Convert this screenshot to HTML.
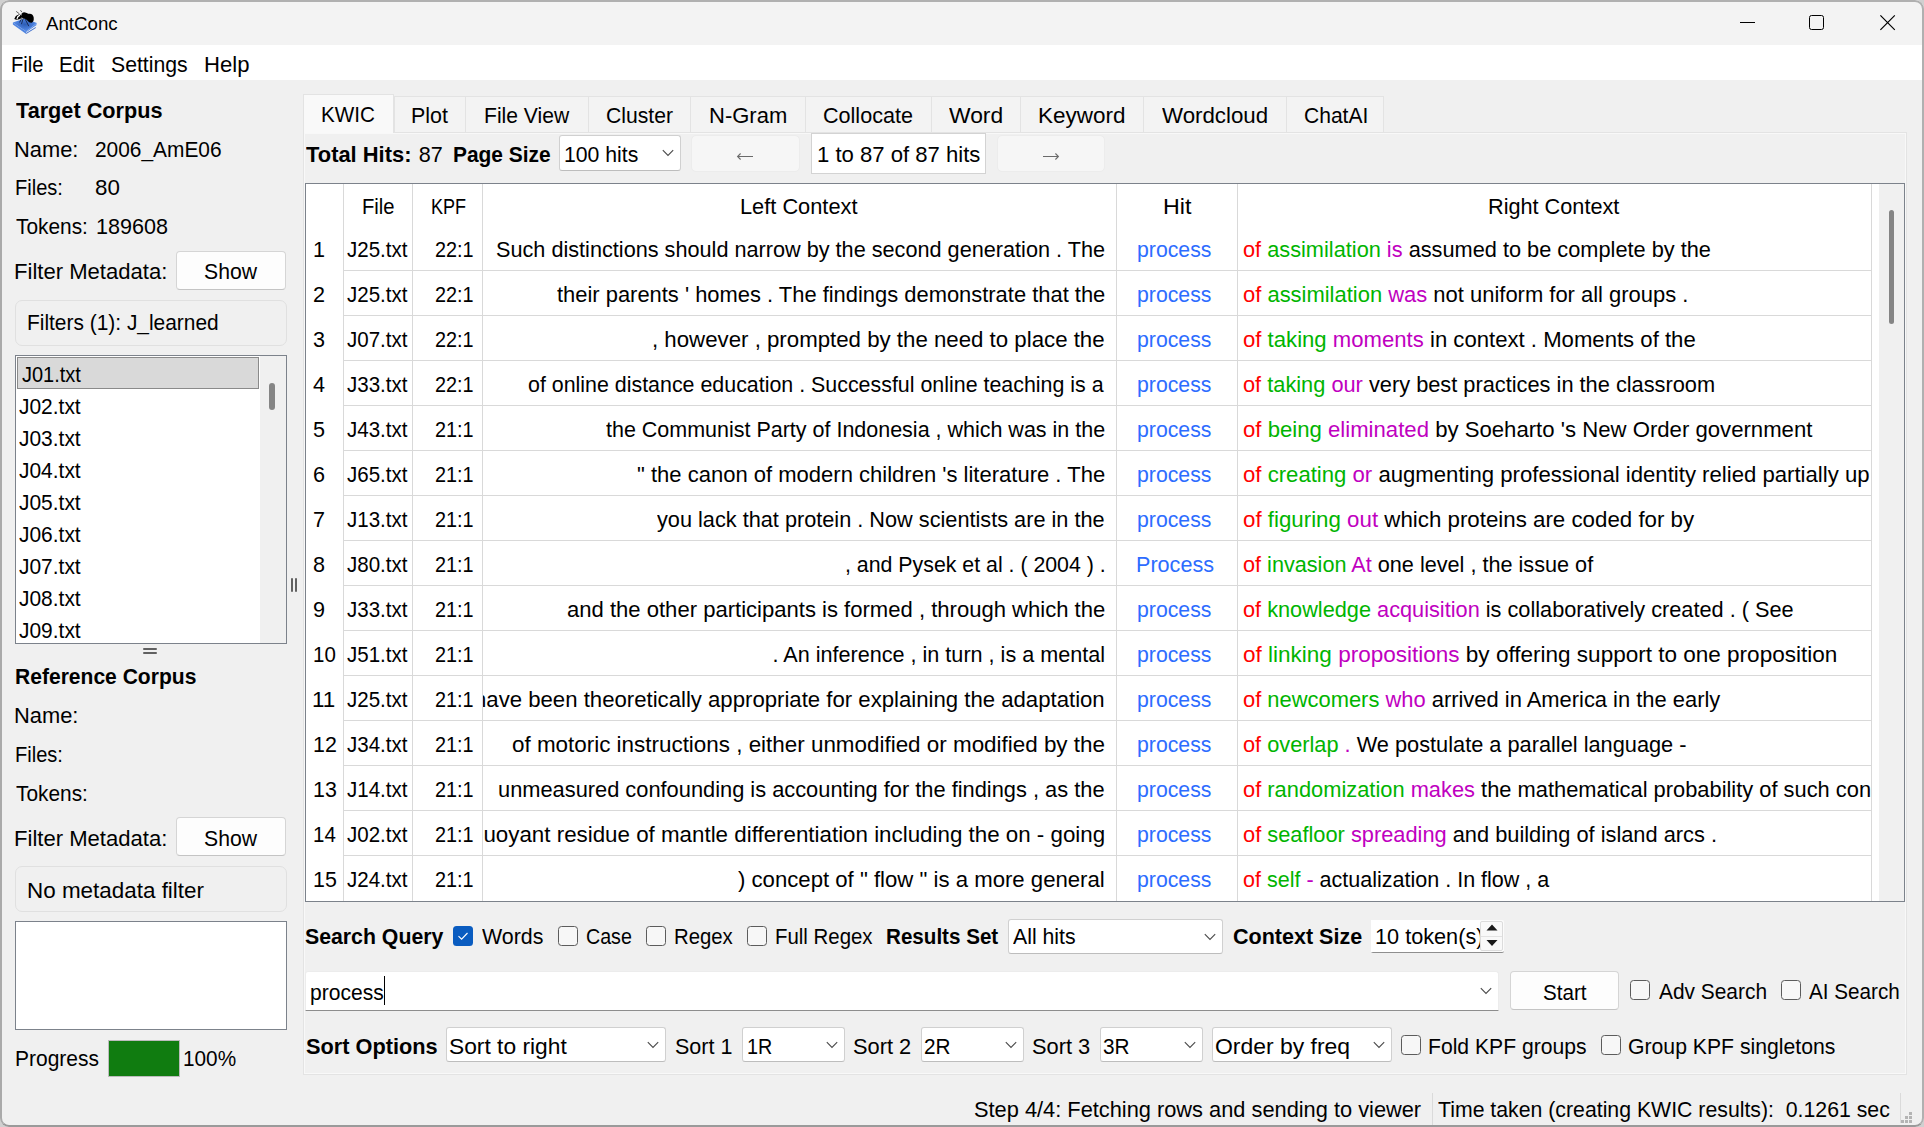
<!DOCTYPE html>
<html><head><meta charset="utf-8"><title>AntConc</title>
<style>
html,body{margin:0;padding:0;}
body{width:1924px;height:1127px;overflow:hidden;position:relative;background:#d0d0d0;font-family:"Liberation Sans",sans-serif;color:#000;}
#win{position:absolute;left:0;top:0;width:1924px;height:1127px;background:#f0f0f0;border-radius:9px;overflow:hidden;}
#frame{position:absolute;left:0;top:0;width:1924px;height:1127px;border:2px solid #b0b0b0;border-bottom-color:#9a9a9a;border-left-color:#aaaaaa;border-radius:9px;box-sizing:border-box;pointer-events:none;}
.t{position:absolute;white-space:pre;}
.b{position:absolute;}
</style></head><body><div id="win">
<div class="b" style="left:0px;top:0px;width:1924px;height:45px;background:#f3f3f3;"></div>
<div class="b" style="left:0px;top:45px;width:1924px;height:35px;background:#fff;"></div>
<svg class="b" style="left:10px;top:8px" width="30" height="28" viewBox="0 0 30 28">
<defs><radialGradient id="bk" cx="0.5" cy="0.45" r="0.65"><stop offset="0" stop-color="#2c5cb4"/><stop offset="0.55" stop-color="#4a7fdc"/><stop offset="1" stop-color="#6499f0"/></radialGradient></defs>
<path d="M2.9 14.6 L14.5 10.4 L26.9 15.1 L16.2 23.6 Z" fill="url(#bk)"/>
<path d="M2.9 14.6 L16.2 23.6 L16.2 25.9 L2.9 16.6 Z" fill="#4f84e0"/>
<path d="M16.2 23.6 L26.9 15.1 L26.2 17.4 L16.2 24.4 Z" fill="#5b8fe8"/>
<path d="M16.2 24.4 L26.2 17.4 L26.1 18.8 L16.2 25.0 Z" fill="#f4f4f4"/>
<path d="M16.2 25.0 L26.1 18.8 L25.4 20.3 L16.2 25.9 Z" fill="#3f6fcc"/>
<path d="M11.5 5.8 Q13.2 3.6 15.2 4.6 Q16.8 5.2 18.2 5.8 Q23 4.9 23.7 9.5 Q24.2 13.8 21.6 14.8 Q19.2 15.1 17.4 12.6 Q15.6 10.6 13.2 10.5 Q11.2 10.2 11.5 5.8 Z" fill="#000"/>
<path d="M4.3 11 Q5.2 7.6 8.6 6.6 Q11.3 6.2 12.2 8.2 Q12.1 10.6 9.4 11.3 Q6.3 12.2 4.3 11 Z" fill="#000"/>
<path d="M7.1 10.6 Q7.3 8.5 9.6 7.4" stroke="#fff" stroke-width="1.2" fill="none" stroke-linecap="round"/>
<path d="M6.2 3.4 L9.4 5.8 M10.5 2.2 L11.9 4.2" stroke="#222" stroke-width="0.7"/>
<path d="M11.7 10.4 L9.6 14.4 M13.3 10.2 L11.4 16.2 M14.9 10.6 L18.8 18.2" stroke="#15254a" stroke-width="0.9"/>
</svg>
<div class="t" style="top:12.12px;font-size:18.4px;line-height:23px;left:46.20px;transform:scaleX(1.0157);transform-origin:0 0;"><span id="k1">AntConc</span></div>
<div class="b" style="left:1740px;top:22px;width:15px;height:1px;background:#000;"></div>
<div class="b" style="left:1809px;top:15px;width:15px;height:15px;border:1.3px solid #000;border-radius:2.5px;box-sizing:border-box;"></div>
<svg class="b" style="left:1879px;top:14px" width="18" height="18" viewBox="0 0 18 18"><path d="M1.4 1.4 L15.8 15.8 M15.8 1.4 L1.4 15.8" stroke="#000" stroke-width="1.2"/></svg>
<div class="t" style="top:51.02px;font-size:21.6px;line-height:27px;left:10.57px;transform:scaleX(0.9303);transform-origin:0 0;"><span id="k2">File</span></div>
<div class="t" style="top:51.02px;font-size:21.6px;line-height:27px;left:59.45px;transform:scaleX(0.9500);transform-origin:0 0;"><span id="k3">Edit</span></div>
<div class="t" style="top:51.02px;font-size:21.6px;line-height:27px;left:110.82px;transform:scaleX(0.9831);transform-origin:0 0;"><span id="k4">Settings</span></div>
<div class="t" style="top:51.02px;font-size:21.6px;line-height:27px;left:204.18px;transform:scaleX(1.0233);transform-origin:0 0;"><span id="k5">Help</span></div>
<div class="t" style="top:96.52px;font-size:21.6px;line-height:27px;font-weight:700;left:15.50px;transform:scaleX(1.0034);transform-origin:0 0;"><span id="k6">Target Corpus</span></div>
<div class="t" style="top:135.92px;font-size:21.6px;line-height:27px;left:14.49px;transform:scaleX(1.0131);transform-origin:0 0;"><span id="k7">Name:</span></div>
<div class="t" style="top:135.92px;font-size:21.6px;line-height:27px;left:95.03px;transform:scaleX(0.9674);transform-origin:0 0;"><span id="k8">2006_AmE06</span></div>
<div class="t" style="top:174.32px;font-size:21.6px;line-height:27px;left:14.57px;transform:scaleX(0.9286);transform-origin:0 0;"><span id="k9">Files:</span></div>
<div class="t" style="top:174.32px;font-size:21.6px;line-height:27px;left:94.97px;transform:scaleX(1.0348);transform-origin:0 0;"><span id="k10">80</span></div>
<div class="t" style="top:212.92px;font-size:21.6px;line-height:27px;left:15.50px;transform:scaleX(0.9658);transform-origin:0 0;"><span id="k11">Tokens:</span></div>
<div class="t" style="top:212.92px;font-size:21.6px;line-height:27px;left:96.30px;transform:scaleX(0.9986);transform-origin:0 0;"><span id="k12">189608</span></div>
<div class="t" style="top:258.02px;font-size:21.6px;line-height:27px;left:14.28px;transform:scaleX(1.0224);transform-origin:0 0;"><span id="k13">Filter Metadata:</span></div>
<div class="b" style="left:176px;top:251px;width:110px;height:39px;background:#fdfdfd;border:1px solid #d5d5d5;border-bottom-color:#c4c4c4;border-radius:4px;box-sizing:border-box;"></div>
<div class="t" style="top:258.02px;font-size:21.6px;line-height:27px;left:203.50px;transform:scaleX(0.9811);transform-origin:0 0;"><span id="k14">Show</span></div>
<div class="b" style="left:15px;top:300px;width:272px;height:46px;background:#f0f0f0;border:1px solid #e0e0e0;border-radius:7px;box-sizing:border-box;"></div>
<div class="t" style="top:309.32px;font-size:21.6px;line-height:27px;left:26.95px;transform:scaleX(0.9682);transform-origin:0 0;"><span id="k15">Filters (1): J_learned</span></div>
<div class="b" style="left:15px;top:355px;width:272px;height:289px;background:#fff;border:1px solid #7c828b;box-sizing:border-box;"></div>
<div class="b" style="left:260px;top:356px;width:26px;height:287px;background:#f0f0f0;"></div>
<div class="b" style="left:17px;top:357px;width:242px;height:32px;background:#d9d9d9;border:1px solid #8a8a8a;box-sizing:border-box;"></div>
<div class="t" style="top:361.02px;font-size:21.6px;line-height:27px;left:22.11px;transform:scaleX(0.9258);transform-origin:0 0;"><span id="k16">J01.txt</span></div>
<div class="t" style="top:393.02px;font-size:21.6px;line-height:27px;left:19.32px;transform:scaleX(0.9698);transform-origin:0 0;"><span id="k17">J02.txt</span></div>
<div class="t" style="top:425.02px;font-size:21.6px;line-height:27px;left:19.32px;transform:scaleX(0.9698);transform-origin:0 0;"><span id="k18">J03.txt</span></div>
<div class="t" style="top:457.02px;font-size:21.6px;line-height:27px;left:19.32px;transform:scaleX(0.9698);transform-origin:0 0;"><span id="k19">J04.txt</span></div>
<div class="t" style="top:489.02px;font-size:21.6px;line-height:27px;left:19.32px;transform:scaleX(0.9698);transform-origin:0 0;"><span id="k20">J05.txt</span></div>
<div class="t" style="top:521.02px;font-size:21.6px;line-height:27px;left:19.32px;transform:scaleX(0.9698);transform-origin:0 0;"><span id="k21">J06.txt</span></div>
<div class="t" style="top:553.02px;font-size:21.6px;line-height:27px;left:19.32px;transform:scaleX(0.9698);transform-origin:0 0;"><span id="k22">J07.txt</span></div>
<div class="t" style="top:585.02px;font-size:21.6px;line-height:27px;left:19.32px;transform:scaleX(0.9698);transform-origin:0 0;"><span id="k23">J08.txt</span></div>
<div class="t" style="top:617.02px;font-size:21.6px;line-height:27px;left:19.32px;transform:scaleX(0.9698);transform-origin:0 0;"><span id="k24">J09.txt</span></div>
<div class="b" style="left:269px;top:383px;width:6px;height:27px;background:#858585;border-radius:3px;"></div>
<div class="b" style="left:143px;top:648px;width:14px;height:2px;background:#616161;border-radius:1px;"></div>
<div class="b" style="left:143px;top:652px;width:14px;height:2px;background:#616161;border-radius:1px;"></div>
<div class="b" style="left:291px;top:578px;width:2px;height:14px;background:#616161;border-radius:1px;"></div>
<div class="b" style="left:295px;top:578px;width:2px;height:14px;background:#616161;border-radius:1px;"></div>
<div class="t" style="top:662.52px;font-size:21.6px;line-height:27px;font-weight:700;left:15.03px;transform:scaleX(0.9750);transform-origin:0 0;"><span id="k25">Reference Corpus</span></div>
<div class="t" style="top:701.52px;font-size:21.6px;line-height:27px;left:14.49px;transform:scaleX(1.0131);transform-origin:0 0;"><span id="k26">Name:</span></div>
<div class="t" style="top:741.02px;font-size:21.6px;line-height:27px;left:14.57px;transform:scaleX(0.9286);transform-origin:0 0;"><span id="k27">Files:</span></div>
<div class="t" style="top:780.02px;font-size:21.6px;line-height:27px;left:15.50px;transform:scaleX(0.9658);transform-origin:0 0;"><span id="k28">Tokens:</span></div>
<div class="t" style="top:824.52px;font-size:21.6px;line-height:27px;left:14.28px;transform:scaleX(1.0224);transform-origin:0 0;"><span id="k29">Filter Metadata:</span></div>
<div class="b" style="left:176px;top:817px;width:110px;height:39px;background:#fdfdfd;border:1px solid #d5d5d5;border-bottom-color:#c4c4c4;border-radius:4px;box-sizing:border-box;"></div>
<div class="t" style="top:824.52px;font-size:21.6px;line-height:27px;left:203.50px;transform:scaleX(0.9811);transform-origin:0 0;"><span id="k30">Show</span></div>
<div class="b" style="left:15px;top:866px;width:272px;height:46px;background:#f0f0f0;border:1px solid #e0e0e0;border-radius:7px;box-sizing:border-box;"></div>
<div class="t" style="top:876.52px;font-size:21.6px;line-height:27px;left:26.94px;transform:scaleX(1.0385);transform-origin:0 0;"><span id="k31">No metadata filter</span></div>
<div class="b" style="left:15px;top:921px;width:272px;height:109px;background:#fff;border:1px solid #7c828b;box-sizing:border-box;"></div>
<div class="t" style="top:1045.02px;font-size:21.6px;line-height:27px;left:15.03px;transform:scaleX(0.9718);transform-origin:0 0;"><span id="k32">Progress</span></div>
<div class="b" style="left:108px;top:1040px;width:72px;height:37px;background:#107c10;border:1px solid #bcbcbc;box-sizing:border-box;"></div>
<div class="t" style="top:1045.02px;font-size:21.6px;line-height:27px;left:182.74px;transform:scaleX(0.9611);transform-origin:0 0;"><span id="k33">100%</span></div>
<div class="b" style="left:303px;top:132px;width:1604px;height:943px;border:1px solid #e3e3e3;box-sizing:border-box;"></div>
<div class="b" style="left:304px;top:133px;width:1602px;height:941px;border:1px solid #f8f8f8;box-sizing:border-box;"></div>
<div class="b" style="left:394px;top:96px;width:990px;height:36px;background:#f3f3f3;border-top:1px solid #e3e3e3;border-right:1px solid #e3e3e3;box-sizing:border-box;"></div>
<div class="b" style="left:394px;top:96px;width:1px;height:36px;background:#e3e3e3;"></div>
<div class="b" style="left:465px;top:96px;width:1px;height:36px;background:#e3e3e3;"></div>
<div class="b" style="left:588px;top:96px;width:1px;height:36px;background:#e3e3e3;"></div>
<div class="b" style="left:690px;top:96px;width:1px;height:36px;background:#e3e3e3;"></div>
<div class="b" style="left:804.5px;top:96px;width:1.0px;height:36px;background:#e3e3e3;"></div>
<div class="b" style="left:930.5px;top:96px;width:1.0px;height:36px;background:#e3e3e3;"></div>
<div class="b" style="left:1020px;top:96px;width:1px;height:36px;background:#e3e3e3;"></div>
<div class="b" style="left:1142.5px;top:96px;width:1.0px;height:36px;background:#e3e3e3;"></div>
<div class="b" style="left:1285.5px;top:96px;width:1.0px;height:36px;background:#e3e3e3;"></div>
<div class="b" style="left:303px;top:94px;width:91px;height:39px;background:#f9f9f9;border:1px solid #e3e3e3;border-bottom:none;box-sizing:border-box;"></div>
<div class="t" style="top:100.62px;font-size:21.6px;line-height:27px;left:321.15px;transform:scaleX(0.9574);transform-origin:0 0;"><span id="k34">KWIC</span></div>
<div class="t" style="top:102.02px;font-size:21.6px;line-height:27px;left:411.20px;transform:scaleX(0.9917);transform-origin:0 0;"><span id="k35">Plot</span></div>
<div class="t" style="top:102.02px;font-size:21.6px;line-height:27px;left:483.92px;transform:scaleX(0.9767);transform-origin:0 0;"><span id="k36">File View</span></div>
<div class="t" style="top:102.02px;font-size:21.6px;line-height:27px;left:606.00px;transform:scaleX(0.9794);transform-origin:0 0;"><span id="k37">Cluster</span></div>
<div class="t" style="top:102.02px;font-size:21.6px;line-height:27px;left:708.74px;transform:scaleX(1.0187);transform-origin:0 0;"><span id="k38">N-Gram</span></div>
<div class="t" style="top:102.02px;font-size:21.6px;line-height:27px;left:822.88px;transform:scaleX(0.9989);transform-origin:0 0;"><span id="k39">Collocate</span></div>
<div class="t" style="top:102.02px;font-size:21.6px;line-height:27px;left:949.02px;transform:scaleX(1.0580);transform-origin:0 0;"><span id="k40">Word</span></div>
<div class="t" style="top:102.02px;font-size:21.6px;line-height:27px;left:1037.96px;transform:scaleX(1.0407);transform-origin:0 0;"><span id="k41">Keyword</span></div>
<div class="t" style="top:102.02px;font-size:21.6px;line-height:27px;left:1162.10px;transform:scaleX(1.0324);transform-origin:0 0;"><span id="k42">Wordcloud</span></div>
<div class="t" style="top:102.02px;font-size:21.6px;line-height:27px;left:1303.94px;transform:scaleX(0.9750);transform-origin:0 0;"><span id="k43">ChatAI</span></div>
<div class="t" style="top:141.02px;font-size:21.6px;line-height:27px;font-weight:700;left:305.50px;transform:scaleX(1.0147);transform-origin:0 0;"><span id="k44">Total Hits:</span></div>
<div class="t" style="top:141.02px;font-size:21.6px;line-height:27px;left:418.70px;transform:scaleX(1.0000);transform-origin:0 0;"><span id="k45">87</span></div>
<div class="t" style="top:141.02px;font-size:21.6px;line-height:27px;font-weight:700;left:452.53px;transform:scaleX(0.9687);transform-origin:0 0;"><span id="k46">Page Size</span></div>
<div class="b" style="left:559px;top:135px;width:122px;height:36px;background:#fff;border:1px solid #d0d0d0;border-bottom-color:#bdbdbd;border-radius:3px;box-sizing:border-box;"></div>
<svg class="b" style="left:661px;top:148.0px" width="14" height="10" viewBox="0 0 14 10"><path d="M1.8 2.2 L7 7.4 L12.2 2.2" fill="none" stroke="#4a4a4a" stroke-width="1.1"/></svg>
<div class="t" style="top:140.52px;font-size:21.6px;line-height:27px;left:563.82px;transform:scaleX(0.9824);transform-origin:0 0;"><span id="k47">100 hits</span></div>
<div class="b" style="left:691px;top:135px;width:109px;height:37px;background:#f6f6f6;border:1px solid #ececec;border-radius:5px;box-sizing:border-box;"></div>
<svg class="b" style="left:736px;top:151px" width="18" height="12" viewBox="0 0 18 12"><path d="M1.6 5.5 L17 5.5 M4.6 2.5 L1.6 5.5 L4.6 8.5" fill="none" stroke="#6a6a6a" stroke-width="1.1"/></svg>
<div class="b" style="left:811px;top:133px;width:175px;height:41px;background:#fff;border:1px solid #d3d3d3;box-sizing:border-box;"></div>
<div class="t" style="top:141.02px;font-size:21.6px;line-height:27px;left:816.68px;transform:scaleX(1.0234);transform-origin:0 0;"><span id="k48">1 to 87 of 87 hits</span></div>
<div class="b" style="left:997px;top:135px;width:108px;height:37px;background:#f6f6f6;border:1px solid #ececec;border-radius:5px;box-sizing:border-box;"></div>
<svg class="b" style="left:1042px;top:151px" width="18" height="12" viewBox="0 0 18 12"><path d="M1 5.5 L16.4 5.5 M13.4 2.5 L16.4 5.5 L13.4 8.5" fill="none" stroke="#6a6a6a" stroke-width="1.1"/></svg>
<div class="b" style="left:305px;top:183px;width:1600px;height:719px;background:#fff;border:1px solid #7c828b;box-sizing:border-box;"></div>
<div class="b" style="left:1879px;top:184px;width:25px;height:717px;background:#f0f0f0;"></div>
<div class="b" style="left:1889px;top:210px;width:5px;height:114px;background:#858585;border-radius:3px;"></div>
<div class="b" style="left:343px;top:184px;width:1px;height:717px;background:#d9d9d9;"></div>
<div class="b" style="left:412px;top:184px;width:1px;height:717px;background:#d9d9d9;"></div>
<div class="b" style="left:482px;top:184px;width:1px;height:717px;background:#d9d9d9;"></div>
<div class="b" style="left:1116px;top:184px;width:1px;height:717px;background:#d9d9d9;"></div>
<div class="b" style="left:1237px;top:184px;width:1px;height:717px;background:#d9d9d9;"></div>
<div class="b" style="left:1871px;top:184px;width:1px;height:717px;background:#d9d9d9;"></div>
<div class="b" style="left:344px;top:270px;width:1528px;height:1px;background:#d9d9d9;"></div>
<div class="b" style="left:344px;top:315px;width:1528px;height:1px;background:#d9d9d9;"></div>
<div class="b" style="left:344px;top:360px;width:1528px;height:1px;background:#d9d9d9;"></div>
<div class="b" style="left:344px;top:405px;width:1528px;height:1px;background:#d9d9d9;"></div>
<div class="b" style="left:344px;top:450px;width:1528px;height:1px;background:#d9d9d9;"></div>
<div class="b" style="left:344px;top:495px;width:1528px;height:1px;background:#d9d9d9;"></div>
<div class="b" style="left:344px;top:540px;width:1528px;height:1px;background:#d9d9d9;"></div>
<div class="b" style="left:344px;top:585px;width:1528px;height:1px;background:#d9d9d9;"></div>
<div class="b" style="left:344px;top:630px;width:1528px;height:1px;background:#d9d9d9;"></div>
<div class="b" style="left:344px;top:675px;width:1528px;height:1px;background:#d9d9d9;"></div>
<div class="b" style="left:344px;top:720px;width:1528px;height:1px;background:#d9d9d9;"></div>
<div class="b" style="left:344px;top:765px;width:1528px;height:1px;background:#d9d9d9;"></div>
<div class="b" style="left:344px;top:810px;width:1528px;height:1px;background:#d9d9d9;"></div>
<div class="b" style="left:344px;top:855px;width:1528px;height:1px;background:#d9d9d9;"></div>
<div class="t" style="top:193.02px;font-size:21.6px;line-height:27px;left:362.15px;transform:scaleX(0.9364);transform-origin:0 0;"><span id="k49">File</span></div>
<div class="t" style="top:193.02px;font-size:21.6px;line-height:27px;left:430.87px;transform:scaleX(0.8350);transform-origin:0 0;"><span id="k50">KPF</span></div>
<div class="t" style="top:193.02px;font-size:21.6px;line-height:27px;left:740.07px;transform:scaleX(1.0087);transform-origin:0 0;"><span id="k51">Left Context</span></div>
<div class="t" style="top:193.02px;font-size:21.6px;line-height:27px;left:1162.61px;transform:scaleX(1.0760);transform-origin:0 0;"><span id="k52">Hit</span></div>
<div class="t" style="top:193.02px;font-size:21.6px;line-height:27px;left:1488.07px;transform:scaleX(1.0038);transform-origin:0 0;"><span id="k53">Right Context</span></div>
<div class="t" style="top:235.62px;font-size:21.6px;line-height:27px;left:313px;"><span id="k54">1</span></div>
<div class="t" style="top:235.62px;font-size:21.6px;line-height:27px;left:346.90px;transform:scaleX(0.9500);transform-origin:0 0;"><span id="k55">J25.txt</span></div>
<div class="t" style="top:235.62px;font-size:21.6px;line-height:27px;left:434.95px;transform:scaleX(0.9175);transform-origin:0 0;"><span id="k56">22:1</span></div>
<div class="b" style="left:483px;top:226px;width:633px;height:44px;overflow:hidden"><div class="t" style="top:9.62px;font-size:21.6px;line-height:27px;left:13.00px;transform:scaleX(1.0033);transform-origin:0 0;"><span id="k57">Such distinctions should narrow by the second generation . The</span></div></div>
<div class="t" style="top:235.62px;font-size:21.6px;line-height:27px;color:#2d6cff;left:1136.82px;transform:scaleX(0.9836);transform-origin:0 0;"><span id="k58">process</span></div>
<div class="b" style="left:1238px;top:226px;width:633px;height:44px;overflow:hidden"><div class="t" style="top:9.62px;font-size:21.6px;line-height:27px;left:5.00px;transform:scaleX(1.0073);transform-origin:0 0;"><span id="k59"><span style="color:#ff0000">of</span> <span style="color:#00b400">assimilation</span> <span style="color:#c000c0">is</span> assumed to be complete by the</span></div></div>
<div class="t" style="top:280.62px;font-size:21.6px;line-height:27px;left:313px;"><span id="k60">2</span></div>
<div class="t" style="top:280.62px;font-size:21.6px;line-height:27px;left:346.90px;transform:scaleX(0.9500);transform-origin:0 0;"><span id="k61">J25.txt</span></div>
<div class="t" style="top:280.62px;font-size:21.6px;line-height:27px;left:434.95px;transform:scaleX(0.9175);transform-origin:0 0;"><span id="k62">22:1</span></div>
<div class="b" style="left:483px;top:271px;width:633px;height:44px;overflow:hidden"><div class="t" style="top:9.62px;font-size:21.6px;line-height:27px;left:73.71px;transform:scaleX(1.0148);transform-origin:0 0;"><span id="k63">their parents ' homes . The findings demonstrate that the</span></div></div>
<div class="t" style="top:280.62px;font-size:21.6px;line-height:27px;color:#2d6cff;left:1136.82px;transform:scaleX(0.9836);transform-origin:0 0;"><span id="k64">process</span></div>
<div class="b" style="left:1238px;top:271px;width:633px;height:44px;overflow:hidden"><div class="t" style="top:9.62px;font-size:21.6px;line-height:27px;left:5.00px;transform:scaleX(1.0167);transform-origin:0 0;"><span id="k65"><span style="color:#ff0000">of</span> <span style="color:#00b400">assimilation</span> <span style="color:#c000c0">was</span> not uniform for all groups .</span></div></div>
<div class="t" style="top:325.62px;font-size:21.6px;line-height:27px;left:313px;"><span id="k66">3</span></div>
<div class="t" style="top:325.62px;font-size:21.6px;line-height:27px;left:346.90px;transform:scaleX(0.9500);transform-origin:0 0;"><span id="k67">J07.txt</span></div>
<div class="t" style="top:325.62px;font-size:21.6px;line-height:27px;left:434.95px;transform:scaleX(0.9175);transform-origin:0 0;"><span id="k68">22:1</span></div>
<div class="b" style="left:483px;top:316px;width:633px;height:44px;overflow:hidden"><div class="t" style="top:9.62px;font-size:21.6px;line-height:27px;left:169.40px;transform:scaleX(1.0302);transform-origin:0 0;"><span id="k69">, however , prompted by the need to place the</span></div></div>
<div class="t" style="top:325.62px;font-size:21.6px;line-height:27px;color:#2d6cff;left:1136.82px;transform:scaleX(0.9836);transform-origin:0 0;"><span id="k70">process</span></div>
<div class="b" style="left:1238px;top:316px;width:633px;height:44px;overflow:hidden"><div class="t" style="top:9.62px;font-size:21.6px;line-height:27px;left:5.00px;transform:scaleX(1.0249);transform-origin:0 0;"><span id="k71"><span style="color:#ff0000">of</span> <span style="color:#00b400">taking</span> <span style="color:#c000c0">moments</span> in context . Moments of the</span></div></div>
<div class="t" style="top:370.62px;font-size:21.6px;line-height:27px;left:313px;"><span id="k72">4</span></div>
<div class="t" style="top:370.62px;font-size:21.6px;line-height:27px;left:346.90px;transform:scaleX(0.9500);transform-origin:0 0;"><span id="k73">J33.txt</span></div>
<div class="t" style="top:370.62px;font-size:21.6px;line-height:27px;left:434.95px;transform:scaleX(0.9175);transform-origin:0 0;"><span id="k74">22:1</span></div>
<div class="b" style="left:483px;top:361px;width:633px;height:44px;overflow:hidden"><div class="t" style="top:9.62px;font-size:21.6px;line-height:27px;left:45.39px;transform:scaleX(0.9907);transform-origin:0 0;"><span id="k75">of online distance education . Successful online teaching is a</span></div></div>
<div class="t" style="top:370.62px;font-size:21.6px;line-height:27px;color:#2d6cff;left:1136.82px;transform:scaleX(0.9836);transform-origin:0 0;"><span id="k76">process</span></div>
<div class="b" style="left:1238px;top:361px;width:633px;height:44px;overflow:hidden"><div class="t" style="top:9.62px;font-size:21.6px;line-height:27px;left:5.00px;transform:scaleX(1.0086);transform-origin:0 0;"><span id="k77"><span style="color:#ff0000">of</span> <span style="color:#00b400">taking</span> <span style="color:#c000c0">our</span> very best practices in the classroom</span></div></div>
<div class="t" style="top:415.62px;font-size:21.6px;line-height:27px;left:313px;"><span id="k78">5</span></div>
<div class="t" style="top:415.62px;font-size:21.6px;line-height:27px;left:346.90px;transform:scaleX(0.9500);transform-origin:0 0;"><span id="k79">J43.txt</span></div>
<div class="t" style="top:415.62px;font-size:21.6px;line-height:27px;left:434.95px;transform:scaleX(0.9175);transform-origin:0 0;"><span id="k80">21:1</span></div>
<div class="b" style="left:483px;top:406px;width:633px;height:44px;overflow:hidden"><div class="t" style="top:9.62px;font-size:21.6px;line-height:27px;left:122.90px;transform:scaleX(0.9948);transform-origin:0 0;"><span id="k81">the Communist Party of Indonesia , which was in the</span></div></div>
<div class="t" style="top:415.62px;font-size:21.6px;line-height:27px;color:#2d6cff;left:1136.82px;transform:scaleX(0.9836);transform-origin:0 0;"><span id="k82">process</span></div>
<div class="b" style="left:1238px;top:406px;width:633px;height:44px;overflow:hidden"><div class="t" style="top:9.62px;font-size:21.6px;line-height:27px;left:5.00px;transform:scaleX(1.0258);transform-origin:0 0;"><span id="k83"><span style="color:#ff0000">of</span> <span style="color:#00b400">being</span> <span style="color:#c000c0">eliminated</span> by Soeharto 's New Order government</span></div></div>
<div class="t" style="top:460.62px;font-size:21.6px;line-height:27px;left:313px;"><span id="k84">6</span></div>
<div class="t" style="top:460.62px;font-size:21.6px;line-height:27px;left:346.90px;transform:scaleX(0.9500);transform-origin:0 0;"><span id="k85">J65.txt</span></div>
<div class="t" style="top:460.62px;font-size:21.6px;line-height:27px;left:434.95px;transform:scaleX(0.9175);transform-origin:0 0;"><span id="k86">21:1</span></div>
<div class="b" style="left:483px;top:451px;width:633px;height:44px;overflow:hidden"><div class="t" style="top:9.62px;font-size:21.6px;line-height:27px;left:153.85px;transform:scaleX(1.0197);transform-origin:0 0;"><span id="k87">" the canon of modern children 's literature . The</span></div></div>
<div class="t" style="top:460.62px;font-size:21.6px;line-height:27px;color:#2d6cff;left:1136.82px;transform:scaleX(0.9836);transform-origin:0 0;"><span id="k88">process</span></div>
<div class="b" style="left:1238px;top:451px;width:633px;height:44px;overflow:hidden"><div class="t" style="top:9.62px;font-size:21.6px;line-height:27px;left:5.00px;transform:scaleX(1.0254);transform-origin:0 0;"><span id="k89"><span style="color:#ff0000">of</span> <span style="color:#00b400">creating</span> <span style="color:#c000c0">or</span> augmenting professional identity relied partially up</span></div></div>
<div class="t" style="top:505.62px;font-size:21.6px;line-height:27px;left:313px;"><span id="k90">7</span></div>
<div class="t" style="top:505.62px;font-size:21.6px;line-height:27px;left:346.90px;transform:scaleX(0.9500);transform-origin:0 0;"><span id="k91">J13.txt</span></div>
<div class="t" style="top:505.62px;font-size:21.6px;line-height:27px;left:434.95px;transform:scaleX(0.9175);transform-origin:0 0;"><span id="k92">21:1</span></div>
<div class="b" style="left:483px;top:496px;width:633px;height:44px;overflow:hidden"><div class="t" style="top:9.62px;font-size:21.6px;line-height:27px;left:174.40px;transform:scaleX(1.0052);transform-origin:0 0;"><span id="k93">you lack that protein . Now scientists are in the</span></div></div>
<div class="t" style="top:505.62px;font-size:21.6px;line-height:27px;color:#2d6cff;left:1136.82px;transform:scaleX(0.9836);transform-origin:0 0;"><span id="k94">process</span></div>
<div class="b" style="left:1238px;top:496px;width:633px;height:44px;overflow:hidden"><div class="t" style="top:9.62px;font-size:21.6px;line-height:27px;left:5.00px;transform:scaleX(1.0325);transform-origin:0 0;"><span id="k95"><span style="color:#ff0000">of</span> <span style="color:#00b400">figuring</span> <span style="color:#c000c0">out</span> which proteins are coded for by</span></div></div>
<div class="t" style="top:550.62px;font-size:21.6px;line-height:27px;left:313px;"><span id="k96">8</span></div>
<div class="t" style="top:550.62px;font-size:21.6px;line-height:27px;left:346.90px;transform:scaleX(0.9500);transform-origin:0 0;"><span id="k97">J80.txt</span></div>
<div class="t" style="top:550.62px;font-size:21.6px;line-height:27px;left:434.95px;transform:scaleX(0.9175);transform-origin:0 0;"><span id="k98">21:1</span></div>
<div class="b" style="left:483px;top:541px;width:633px;height:44px;overflow:hidden"><div class="t" style="top:9.62px;font-size:21.6px;line-height:27px;left:362.26px;transform:scaleX(0.9873);transform-origin:0 0;"><span id="k99">, and Pysek et al . ( 2004 ) .</span></div></div>
<div class="t" style="top:550.62px;font-size:21.6px;line-height:27px;color:#2d6cff;left:675px;width:1000px;text-align:center;"><span id="k100">Process</span></div>
<div class="b" style="left:1238px;top:541px;width:633px;height:44px;overflow:hidden"><div class="t" style="top:9.62px;font-size:21.6px;line-height:27px;left:5.00px;transform:scaleX(1.0023);transform-origin:0 0;"><span id="k101"><span style="color:#ff0000">of</span> <span style="color:#00b400">invasion</span> <span style="color:#c000c0">At</span> one level , the issue of</span></div></div>
<div class="t" style="top:595.62px;font-size:21.6px;line-height:27px;left:313px;"><span id="k102">9</span></div>
<div class="t" style="top:595.62px;font-size:21.6px;line-height:27px;left:346.90px;transform:scaleX(0.9500);transform-origin:0 0;"><span id="k103">J33.txt</span></div>
<div class="t" style="top:595.62px;font-size:21.6px;line-height:27px;left:434.95px;transform:scaleX(0.9175);transform-origin:0 0;"><span id="k104">21:1</span></div>
<div class="b" style="left:483px;top:586px;width:633px;height:44px;overflow:hidden"><div class="t" style="top:9.62px;font-size:21.6px;line-height:27px;left:83.73px;transform:scaleX(1.0215);transform-origin:0 0;"><span id="k105">and the other participants is formed , through which the</span></div></div>
<div class="t" style="top:595.62px;font-size:21.6px;line-height:27px;color:#2d6cff;left:1136.82px;transform:scaleX(0.9836);transform-origin:0 0;"><span id="k106">process</span></div>
<div class="b" style="left:1238px;top:586px;width:633px;height:44px;overflow:hidden"><div class="t" style="top:9.62px;font-size:21.6px;line-height:27px;left:5.00px;transform:scaleX(1.0060);transform-origin:0 0;"><span id="k107"><span style="color:#ff0000">of</span> <span style="color:#00b400">knowledge</span> <span style="color:#c000c0">acquisition</span> is collaboratively created . ( See</span></div></div>
<div class="t" style="top:640.62px;font-size:21.6px;line-height:27px;left:312.55px;transform:scaleX(0.9478);transform-origin:0 0;"><span id="k108">10</span></div>
<div class="t" style="top:640.62px;font-size:21.6px;line-height:27px;left:346.90px;transform:scaleX(0.9500);transform-origin:0 0;"><span id="k109">J51.txt</span></div>
<div class="t" style="top:640.62px;font-size:21.6px;line-height:27px;left:434.95px;transform:scaleX(0.9175);transform-origin:0 0;"><span id="k110">21:1</span></div>
<div class="b" style="left:483px;top:631px;width:633px;height:44px;overflow:hidden"><div class="t" style="top:9.62px;font-size:21.6px;line-height:27px;left:289.52px;transform:scaleX(1.0000);transform-origin:0 0;"><span id="k111">. An inference , in turn , is a mental</span></div></div>
<div class="t" style="top:640.62px;font-size:21.6px;line-height:27px;color:#2d6cff;left:1136.82px;transform:scaleX(0.9836);transform-origin:0 0;"><span id="k112">process</span></div>
<div class="b" style="left:1238px;top:631px;width:633px;height:44px;overflow:hidden"><div class="t" style="top:9.62px;font-size:21.6px;line-height:27px;left:5.00px;transform:scaleX(1.0429);transform-origin:0 0;"><span id="k113"><span style="color:#ff0000">of</span> <span style="color:#00b400">linking</span> <span style="color:#c000c0">propositions</span> by offering support to one proposition</span></div></div>
<div class="t" style="top:685.62px;font-size:21.6px;line-height:27px;left:312.46px;transform:scaleX(1.0381);transform-origin:0 0;"><span id="k114">11</span></div>
<div class="t" style="top:685.62px;font-size:21.6px;line-height:27px;left:346.90px;transform:scaleX(0.9500);transform-origin:0 0;"><span id="k115">J25.txt</span></div>
<div class="t" style="top:685.62px;font-size:21.6px;line-height:27px;left:434.95px;transform:scaleX(0.9175);transform-origin:0 0;"><span id="k116">21:1</span></div>
<div class="b" style="left:483px;top:676px;width:633px;height:44px;overflow:hidden"><div class="t" style="top:9.62px;font-size:21.6px;line-height:27px;left:-8.67px;transform:scaleX(1.0261);transform-origin:0 0;"><span id="k117">have been theoretically appropriate for explaining the adaptation</span></div></div>
<div class="t" style="top:685.62px;font-size:21.6px;line-height:27px;color:#2d6cff;left:1136.82px;transform:scaleX(0.9836);transform-origin:0 0;"><span id="k118">process</span></div>
<div class="b" style="left:1238px;top:676px;width:633px;height:44px;overflow:hidden"><div class="t" style="top:9.62px;font-size:21.6px;line-height:27px;left:5.00px;transform:scaleX(1.0144);transform-origin:0 0;"><span id="k119"><span style="color:#ff0000">of</span> <span style="color:#00b400">newcomers</span> <span style="color:#c000c0">who</span> arrived in America in the early</span></div></div>
<div class="t" style="top:730.62px;font-size:21.6px;line-height:27px;left:312.51px;transform:scaleX(0.9909);transform-origin:0 0;"><span id="k120">12</span></div>
<div class="t" style="top:730.62px;font-size:21.6px;line-height:27px;left:346.90px;transform:scaleX(0.9500);transform-origin:0 0;"><span id="k121">J34.txt</span></div>
<div class="t" style="top:730.62px;font-size:21.6px;line-height:27px;left:434.95px;transform:scaleX(0.9175);transform-origin:0 0;"><span id="k122">21:1</span></div>
<div class="b" style="left:483px;top:721px;width:633px;height:44px;overflow:hidden"><div class="t" style="top:9.62px;font-size:21.6px;line-height:27px;left:29.08px;transform:scaleX(1.0379);transform-origin:0 0;"><span id="k123">of motoric instructions , either unmodified or modified by the</span></div></div>
<div class="t" style="top:730.62px;font-size:21.6px;line-height:27px;color:#2d6cff;left:1136.82px;transform:scaleX(0.9836);transform-origin:0 0;"><span id="k124">process</span></div>
<div class="b" style="left:1238px;top:721px;width:633px;height:44px;overflow:hidden"><div class="t" style="top:9.62px;font-size:21.6px;line-height:27px;left:5.00px;transform:scaleX(1.0075);transform-origin:0 0;"><span id="k125"><span style="color:#ff0000">of</span> <span style="color:#00b400">overlap</span> <span style="color:#c000c0">.</span> We postulate a parallel language -</span></div></div>
<div class="t" style="top:775.62px;font-size:21.6px;line-height:27px;left:312.51px;transform:scaleX(0.9909);transform-origin:0 0;"><span id="k126">13</span></div>
<div class="t" style="top:775.62px;font-size:21.6px;line-height:27px;left:346.90px;transform:scaleX(0.9500);transform-origin:0 0;"><span id="k127">J14.txt</span></div>
<div class="t" style="top:775.62px;font-size:21.6px;line-height:27px;left:434.95px;transform:scaleX(0.9175);transform-origin:0 0;"><span id="k128">21:1</span></div>
<div class="b" style="left:483px;top:766px;width:633px;height:44px;overflow:hidden"><div class="t" style="top:9.62px;font-size:21.6px;line-height:27px;left:15.47px;transform:scaleX(1.0105);transform-origin:0 0;"><span id="k129">unmeasured confounding is accounting for the findings , as the</span></div></div>
<div class="t" style="top:775.62px;font-size:21.6px;line-height:27px;color:#2d6cff;left:1136.82px;transform:scaleX(0.9836);transform-origin:0 0;"><span id="k130">process</span></div>
<div class="b" style="left:1238px;top:766px;width:633px;height:44px;overflow:hidden"><div class="t" style="top:9.62px;font-size:21.6px;line-height:27px;left:5.00px;transform:scaleX(1.0121);transform-origin:0 0;"><span id="k131"><span style="color:#ff0000">of</span> <span style="color:#00b400">randomization</span> <span style="color:#c000c0">makes</span> the mathematical probability of such con</span></div></div>
<div class="t" style="top:820.62px;font-size:21.6px;line-height:27px;left:312.55px;transform:scaleX(0.9478);transform-origin:0 0;"><span id="k132">14</span></div>
<div class="t" style="top:820.62px;font-size:21.6px;line-height:27px;left:346.90px;transform:scaleX(0.9500);transform-origin:0 0;"><span id="k133">J02.txt</span></div>
<div class="t" style="top:820.62px;font-size:21.6px;line-height:27px;left:434.95px;transform:scaleX(0.9175);transform-origin:0 0;"><span id="k134">21:1</span></div>
<div class="b" style="left:483px;top:811px;width:633px;height:44px;overflow:hidden"><div class="t" style="top:9.62px;font-size:21.6px;line-height:27px;left:-12.08px;transform:scaleX(1.0344);transform-origin:0 0;"><span id="k135">buoyant residue of mantle differentiation including the on - going</span></div></div>
<div class="t" style="top:820.62px;font-size:21.6px;line-height:27px;color:#2d6cff;left:1136.82px;transform:scaleX(0.9836);transform-origin:0 0;"><span id="k136">process</span></div>
<div class="b" style="left:1238px;top:811px;width:633px;height:44px;overflow:hidden"><div class="t" style="top:9.62px;font-size:21.6px;line-height:27px;left:5.00px;transform:scaleX(1.0098);transform-origin:0 0;"><span id="k137"><span style="color:#ff0000">of</span> <span style="color:#00b400">seafloor</span> <span style="color:#c000c0">spreading</span> and building of island arcs .</span></div></div>
<div class="t" style="top:865.62px;font-size:21.6px;line-height:27px;left:312.51px;transform:scaleX(0.9909);transform-origin:0 0;"><span id="k138">15</span></div>
<div class="t" style="top:865.62px;font-size:21.6px;line-height:27px;left:346.90px;transform:scaleX(0.9500);transform-origin:0 0;"><span id="k139">J24.txt</span></div>
<div class="t" style="top:865.62px;font-size:21.6px;line-height:27px;left:434.95px;transform:scaleX(0.9175);transform-origin:0 0;"><span id="k140">21:1</span></div>
<div class="b" style="left:483px;top:856px;width:633px;height:44px;overflow:hidden"><div class="t" style="top:9.62px;font-size:21.6px;line-height:27px;left:255.28px;transform:scaleX(1.0261);transform-origin:0 0;"><span id="k141">) concept of " flow " is a more general</span></div></div>
<div class="t" style="top:865.62px;font-size:21.6px;line-height:27px;color:#2d6cff;left:1136.82px;transform:scaleX(0.9836);transform-origin:0 0;"><span id="k142">process</span></div>
<div class="b" style="left:1238px;top:856px;width:633px;height:44px;overflow:hidden"><div class="t" style="top:9.62px;font-size:21.6px;line-height:27px;left:5.00px;transform:scaleX(0.9968);transform-origin:0 0;"><span id="k143"><span style="color:#ff0000">of</span> <span style="color:#00b400">self</span> <span style="color:#c000c0">-</span> actualization . In flow , a</span></div></div>
<div class="t" style="top:922.82px;font-size:21.6px;line-height:27px;font-weight:700;left:305.01px;transform:scaleX(0.9850);transform-origin:0 0;"><span id="k144">Search Query</span></div>
<svg class="b" style="left:453px;top:926px" width="20" height="20" viewBox="0 0 20 20"><rect x="0" y="0" width="20" height="20" rx="3.5" fill="#0a5cc0"/><path d="M5.5 10.2 L8.6 13.2 L14.5 7" fill="none" stroke="#fff" stroke-width="1.1"/></svg>
<div class="t" style="top:922.82px;font-size:21.6px;line-height:27px;left:482.00px;transform:scaleX(0.9903);transform-origin:0 0;"><span id="k145">Words</span></div>
<div class="b" style="left:558px;top:926px;width:20px;height:20px;background:#f7f7f7;border:1px solid #5c5c5c;border-radius:3.5px;box-sizing:border-box;"></div>
<div class="t" style="top:922.82px;font-size:21.6px;line-height:27px;left:586.14px;transform:scaleX(0.9102);transform-origin:0 0;"><span id="k146">Case</span></div>
<div class="b" style="left:646px;top:926px;width:20px;height:20px;background:#f7f7f7;border:1px solid #5c5c5c;border-radius:3.5px;box-sizing:border-box;"></div>
<div class="t" style="top:922.82px;font-size:21.6px;line-height:27px;left:674.26px;transform:scaleX(0.9410);transform-origin:0 0;"><span id="k147">Regex</span></div>
<div class="b" style="left:747px;top:926px;width:20px;height:20px;background:#f7f7f7;border:1px solid #5c5c5c;border-radius:3.5px;box-sizing:border-box;"></div>
<div class="t" style="top:922.82px;font-size:21.6px;line-height:27px;left:775.25px;transform:scaleX(0.9451);transform-origin:0 0;"><span id="k148">Full Regex</span></div>
<div class="t" style="top:922.82px;font-size:21.6px;line-height:27px;font-weight:700;left:886.17px;transform:scaleX(0.9543);transform-origin:0 0;"><span id="k149">Results Set</span></div>
<div class="b" style="left:1008px;top:919px;width:215px;height:35px;background:#fff;border:1px solid #d0d0d0;border-bottom-color:#bdbdbd;border-radius:3px;box-sizing:border-box;"></div>
<svg class="b" style="left:1203px;top:931.5px" width="14" height="10" viewBox="0 0 14 10"><path d="M1.8 2.2 L7 7.4 L12.2 2.2" fill="none" stroke="#4a4a4a" stroke-width="1.1"/></svg>
<div class="t" style="top:922.82px;font-size:21.6px;line-height:27px;left:1012.70px;transform:scaleX(0.9841);transform-origin:0 0;"><span id="k150">All hits</span></div>
<div class="t" style="top:922.82px;font-size:21.6px;line-height:27px;font-weight:700;left:1232.70px;transform:scaleX(0.9969);transform-origin:0 0;"><span id="k151">Context Size</span></div>
<div class="b" style="left:1371px;top:920px;width:133px;height:33px;background:#fbfbfb;border-bottom:1px solid #8f8f8f;border-radius:2px;box-sizing:border-box;"></div>
<div class="b" style="left:1371px;top:920px;width:109px;height:32px;background:#fff;"></div>
<div class="b" style="left:1371px;top:920px;width:109px;height:32px;overflow:hidden"><div class="t" style="top:2.82px;font-size:21.6px;line-height:27px;left:3.80px;transform:scaleX(1.0039);transform-origin:0 0;"><span id="k152">10 token(s)</span></div></div>
<div class="b" style="left:1480px;top:921px;width:23px;height:30px;background:#f9f9f9;border:1px solid #dcdcdc;border-radius:2px;box-sizing:border-box;"></div>
<div class="b" style="left:1481px;top:936px;width:21px;height:1px;background:#e3e3e3;"></div>
<svg class="b" style="left:1484px;top:922px" width="16" height="28" viewBox="0 0 16 28"><path d="M2.5 8.5 L8 2.5 L13.5 8.5 Z M2.5 18 L8 24 L13.5 18 Z" fill="#1a1a1a"/></svg>
<div class="b" style="left:305px;top:971px;width:1194px;height:40px;background:#fff;border:1px solid #ececec;border-bottom:1px solid #8d8d8d;border-radius:3px 3px 0 0;box-sizing:border-box;"></div>
<div class="t" style="top:979.02px;font-size:21.6px;line-height:27px;left:310.43px;transform:scaleX(0.9743);transform-origin:0 0;"><span id="k153">process</span></div>
<div class="b" style="left:384px;top:976px;width:1px;height:29px;background:#000;"></div>
<svg class="b" style="left:1479px;top:986px" width="14" height="10" viewBox="0 0 14 10"><path d="M1.8 2.2 L7 7.4 L12.2 2.2" fill="none" stroke="#4a4a4a" stroke-width="1.1"/></svg>
<div class="b" style="left:1510px;top:971px;width:109px;height:39px;background:#fdfdfd;border:1px solid #d5d5d5;border-bottom-color:#c4c4c4;border-radius:4px;box-sizing:border-box;"></div>
<div class="t" style="top:978.52px;font-size:21.6px;line-height:27px;left:1543.20px;transform:scaleX(0.9556);transform-origin:0 0;"><span id="k154">Start</span></div>
<div class="b" style="left:1630px;top:980px;width:20px;height:20px;background:#f7f7f7;border:1px solid #5c5c5c;border-radius:3.5px;box-sizing:border-box;"></div>
<div class="t" style="top:977.72px;font-size:21.6px;line-height:27px;left:1659.08px;transform:scaleX(0.9676);transform-origin:0 0;"><span id="k155">Adv Search</span></div>
<div class="b" style="left:1781px;top:980px;width:20px;height:20px;background:#f7f7f7;border:1px solid #5c5c5c;border-radius:3.5px;box-sizing:border-box;"></div>
<div class="t" style="top:977.72px;font-size:21.6px;line-height:27px;left:1809.00px;transform:scaleX(0.9574);transform-origin:0 0;"><span id="k156">AI Search</span></div>
<div class="t" style="top:1032.62px;font-size:21.6px;line-height:27px;font-weight:700;left:305.60px;transform:scaleX(1.0069);transform-origin:0 0;"><span id="k157">Sort Options</span></div>
<div class="b" style="left:446px;top:1027px;width:220px;height:35px;background:#fff;border:1px solid #d0d0d0;border-bottom-color:#bdbdbd;border-radius:3px;box-sizing:border-box;"></div>
<svg class="b" style="left:646px;top:1039.5px" width="14" height="10" viewBox="0 0 14 10"><path d="M1.8 2.2 L7 7.4 L12.2 2.2" fill="none" stroke="#4a4a4a" stroke-width="1.1"/></svg>
<div class="t" style="top:1032.62px;font-size:21.6px;line-height:27px;left:449.05px;transform:scaleX(1.0550);transform-origin:0 0;"><span id="k158">Sort to right</span></div>
<div class="t" style="top:1032.62px;font-size:21.6px;line-height:27px;left:674.90px;transform:scaleX(0.9964);transform-origin:0 0;"><span id="k159">Sort 1</span></div>
<div class="b" style="left:742px;top:1027px;width:103px;height:35px;background:#fff;border:1px solid #d0d0d0;border-bottom-color:#bdbdbd;border-radius:3px;box-sizing:border-box;"></div>
<svg class="b" style="left:825px;top:1039.5px" width="14" height="10" viewBox="0 0 14 10"><path d="M1.8 2.2 L7 7.4 L12.2 2.2" fill="none" stroke="#4a4a4a" stroke-width="1.1"/></svg>
<div class="t" style="top:1032.62px;font-size:21.6px;line-height:27px;left:746.78px;transform:scaleX(0.9154);transform-origin:0 0;"><span id="k160">1R</span></div>
<div class="t" style="top:1032.62px;font-size:21.6px;line-height:27px;left:853.19px;transform:scaleX(1.0107);transform-origin:0 0;"><span id="k161">Sort 2</span></div>
<div class="b" style="left:921px;top:1027px;width:103px;height:35px;background:#fff;border:1px solid #d0d0d0;border-bottom-color:#bdbdbd;border-radius:3px;box-sizing:border-box;"></div>
<svg class="b" style="left:1004px;top:1039.5px" width="14" height="10" viewBox="0 0 14 10"><path d="M1.8 2.2 L7 7.4 L12.2 2.2" fill="none" stroke="#4a4a4a" stroke-width="1.1"/></svg>
<div class="t" style="top:1032.62px;font-size:21.6px;line-height:27px;left:924.44px;transform:scaleX(0.9615);transform-origin:0 0;"><span id="k162">2R</span></div>
<div class="t" style="top:1032.62px;font-size:21.6px;line-height:27px;left:1032.49px;transform:scaleX(1.0107);transform-origin:0 0;"><span id="k163">Sort 3</span></div>
<div class="b" style="left:1100px;top:1027px;width:103px;height:35px;background:#fff;border:1px solid #d0d0d0;border-bottom-color:#bdbdbd;border-radius:3px;box-sizing:border-box;"></div>
<svg class="b" style="left:1183px;top:1039.5px" width="14" height="10" viewBox="0 0 14 10"><path d="M1.8 2.2 L7 7.4 L12.2 2.2" fill="none" stroke="#4a4a4a" stroke-width="1.1"/></svg>
<div class="t" style="top:1032.62px;font-size:21.6px;line-height:27px;left:1103.24px;transform:scaleX(0.9615);transform-origin:0 0;"><span id="k164">3R</span></div>
<div class="b" style="left:1212px;top:1027px;width:180px;height:35px;background:#fff;border:1px solid #d0d0d0;border-bottom-color:#bdbdbd;border-radius:3px;box-sizing:border-box;"></div>
<svg class="b" style="left:1372px;top:1039.5px" width="14" height="10" viewBox="0 0 14 10"><path d="M1.8 2.2 L7 7.4 L12.2 2.2" fill="none" stroke="#4a4a4a" stroke-width="1.1"/></svg>
<div class="t" style="top:1032.62px;font-size:21.6px;line-height:27px;left:1214.74px;transform:scaleX(1.0616);transform-origin:0 0;"><span id="k165">Order by freq</span></div>
<div class="b" style="left:1401px;top:1035px;width:20px;height:20px;background:#f7f7f7;border:1px solid #5c5c5c;border-radius:3.5px;box-sizing:border-box;"></div>
<div class="t" style="top:1032.62px;font-size:21.6px;line-height:27px;left:1428.02px;transform:scaleX(0.9783);transform-origin:0 0;"><span id="k166">Fold KPF groups</span></div>
<div class="b" style="left:1601px;top:1035px;width:20px;height:20px;background:#f7f7f7;border:1px solid #5c5c5c;border-radius:3.5px;box-sizing:border-box;"></div>
<div class="t" style="top:1032.62px;font-size:21.6px;line-height:27px;left:1627.82px;transform:scaleX(0.9819);transform-origin:0 0;"><span id="k167">Group KPF singletons</span></div>
<div class="t" style="top:1096.02px;font-size:21.6px;line-height:27px;left:973.79px;transform:scaleX(1.0095);transform-origin:0 0;"><span id="k168">Step 4/4: Fetching rows and sending to viewer</span></div>
<div class="b" style="left:1432px;top:1093px;width:1px;height:32px;background:#dadada;"></div>
<div class="t" style="top:1096.02px;font-size:21.6px;line-height:27px;left:1438.00px;transform:scaleX(0.9847);transform-origin:0 0;"><span id="k169">Time taken (creating KWIC results):  0.1261 sec</span></div>
<div class="b" style="left:1900px;top:1093px;width:1px;height:30px;background:#dadada;"></div>
<div class="b" style="left:1909px;top:1112px;width:3px;height:3px;background:#b4b4b4;"></div>
<div class="b" style="left:1905px;top:1116px;width:3px;height:3px;background:#b4b4b4;"></div>
<div class="b" style="left:1909px;top:1116px;width:3px;height:3px;background:#b4b4b4;"></div>
<div class="b" style="left:1901px;top:1120px;width:3px;height:3px;background:#b4b4b4;"></div>
<div class="b" style="left:1905px;top:1120px;width:3px;height:3px;background:#b4b4b4;"></div>
<div class="b" style="left:1909px;top:1120px;width:3px;height:3px;background:#b4b4b4;"></div>
</div><div id="frame"></div></body></html>
